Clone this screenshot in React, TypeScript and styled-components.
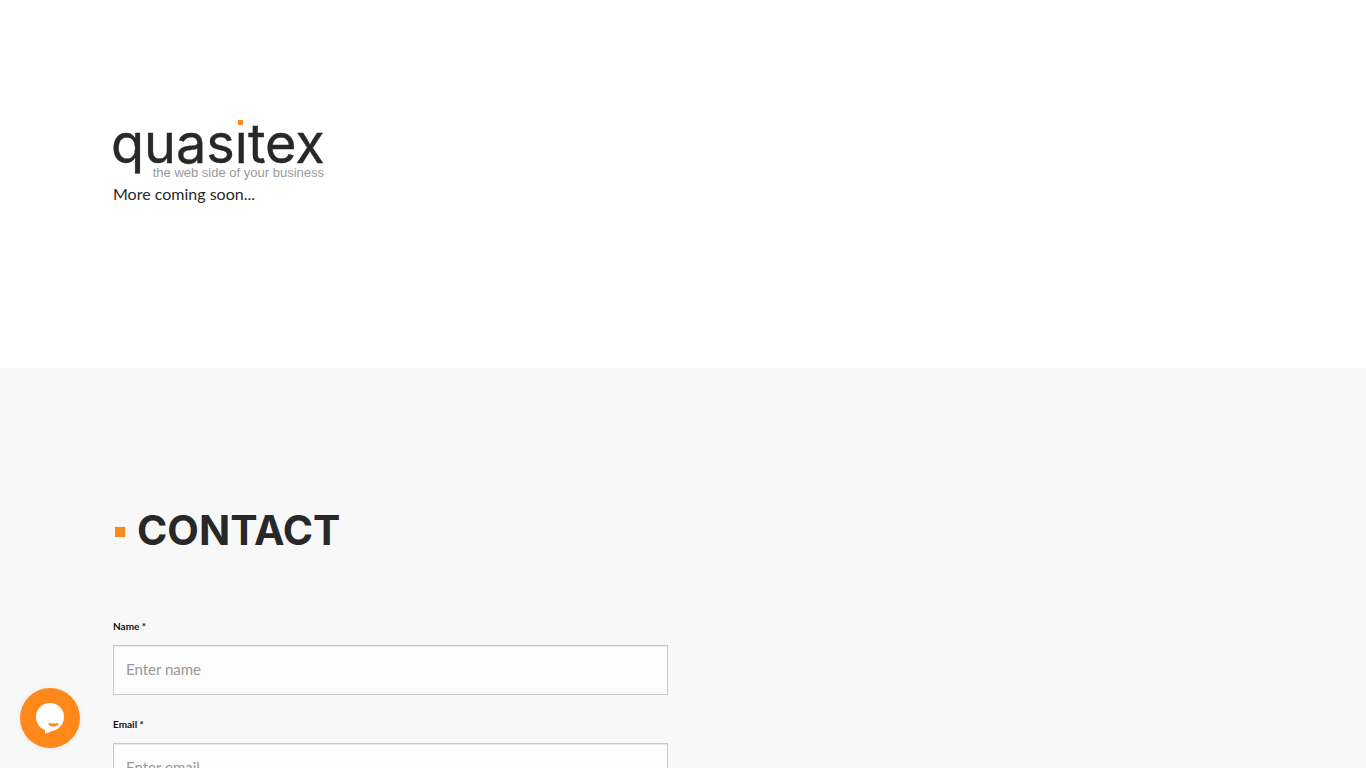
import React from "react";
import styled, { createGlobalStyle } from "styled-components";

const ORANGE = "#ff881a";
const INK = "#282828";

const GlobalStyle = createGlobalStyle`
  *, *::before, *::after { box-sizing: border-box; }
  body {
    margin: 0;
    background: #fff;
    color: ${INK};
    font: 16px/28px Lato, sans-serif;
  }
`;

const Container = styled.div`
  max-width: 1170px;
  margin: 0 auto;
  padding: 0 15px;
`;

const Intro = styled.header`
  padding: 120px 0 160px;
`;

const Logo = styled.svg`
  display: block;
  width: 212px;
  height: 60px;
  overflow: visible;
`;

const Lead = styled.p`
  margin: 0;
`;

const Contact = styled.section`
  padding: 140px 0 120px;
  background: #f8f8f8;
`;

const Heading = styled.h2`
  display: flex;
  align-items: center;
  gap: 12px;
  margin: 0 0 67px;
  padding-left: 2px;
  font: 700 41px/44px Inter, sans-serif;
  text-transform: uppercase;

  &::before {
    content: "";
    width: 10px;
    height: 10px;
    margin-top: 4px;
    background: ${ORANGE};
  }
`;

const Form = styled.form`
  display: flex;
  flex-direction: column;
  gap: 22px;
  width: 50%;
  max-width: 555px;
  min-width: 280px;
`;

const Field = styled.div`
  display: flex;
  flex-direction: column;
  gap: 12px;
`;

const Label = styled.label`
  color: #111;
  font-size: 10px;
  font-weight: 700;
  line-height: 14px;
`;

const Input = styled.input`
  width: 100%;
  height: 50px;
  padding: 5px 12px 7px;
  border: 1px solid #c8c8c8;
  border-radius: 0;
  background: #fcfcfc;
  box-shadow: inset 0 1px 1px rgba(0, 0, 0, 0.075);
  color: ${INK};
  font: 15px Lato, sans-serif;

  &::placeholder {
    color: #999;
    opacity: 1;
  }
`;

const ChatButton = styled.button`
  position: fixed;
  bottom: 20px;
  left: 20px;
  width: 60px;
  height: 60px;
  padding: 0;
  border: 0;
  border-radius: 50%;
  background: ${ORANGE};
  box-shadow: 0 1px 6px rgba(0, 0, 0, 0.06);
  cursor: pointer;

  svg { display: block; }
`;

const fields = [
  { id: "name", label: "Name *", placeholder: "Enter name", type: "text" },
  { id: "email", label: "Email *", placeholder: "Enter email", type: "email" },
];

export default function App() {
  return (
    <>
      <GlobalStyle />
      <Intro>
        <Container>
          <Logo viewBox="0 0 212 60" role="img" aria-label="quasitex, the web side of your business">
            <text x="-2" y="43" fontFamily="Inter, sans-serif" fontSize="54" fill={INK} stroke={INK} strokeWidth="0.4">
              quasıtex
            </text>
            <rect x="125" y="0" width="5" height="5" fill={ORANGE} />
            <text x="211" y="57" textAnchor="end" fontFamily="Liberation Sans, Arial, sans-serif" fontSize="13" fill="#999">
              the web side of your business
            </text>
          </Logo>
          <Lead>More coming soon...</Lead>
        </Container>
      </Intro>
      <Contact>
        <Container>
          <Heading>Contact</Heading>
          <Form>
            {fields.map((field) => (
              <Field key={field.id}>
                <Label htmlFor={field.id}>{field.label}</Label>
                <Input id={field.id} type={field.type} placeholder={field.placeholder} />
              </Field>
            ))}
          </Form>
        </Container>
      </Contact>
      <ChatButton type="button" aria-label="Open chat">
        <svg width="60" height="60" viewBox="0 0 60 60" aria-hidden="true">
          <circle cx="30" cy="29" r="14" fill="#fff" />
          <path fill="#fff" d="M25 40v5.500c6-1.500 12-4 16-9z" />
          <path
            fill={ORANGE}
            d="M29.300 35c2.700.7 5.800.7 8.400 0 .8-.2 1.200.5.7 1.200-1 1.500-2.700 2.300-4.800 2.300-2.300 0-4.200-.8-5-2.300-.5-.8-.2-1.400.7-1.200z"
          />
        </svg>
      </ChatButton>
    </>
  );
}
